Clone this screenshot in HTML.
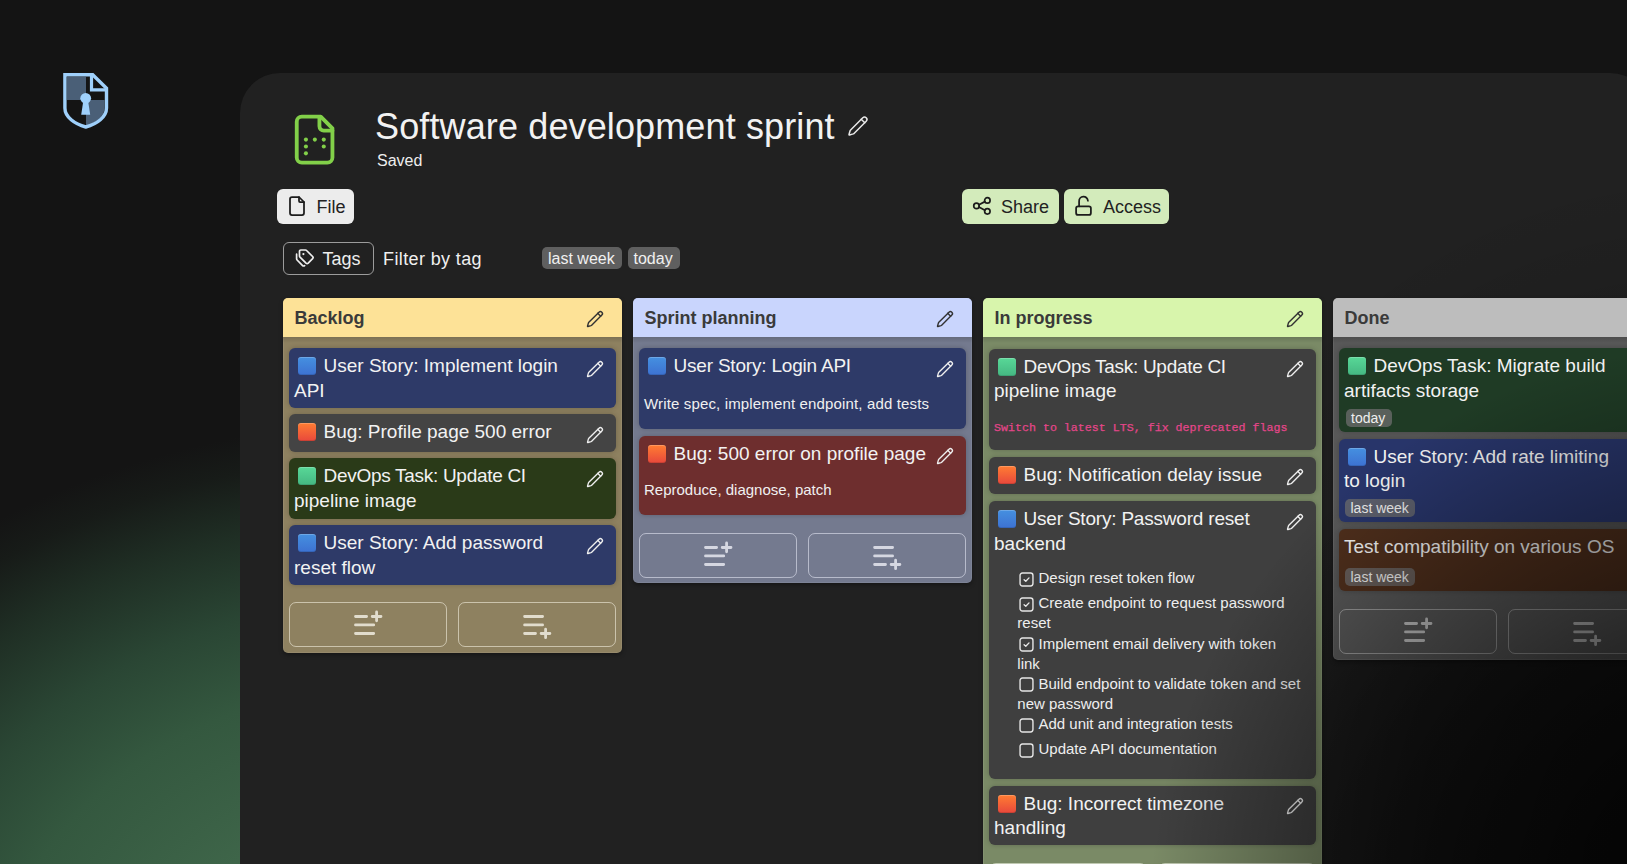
<!DOCTYPE html><html><head><meta charset="utf-8"><style>
html,body{margin:0;padding:0;}
body{width:1627px;height:864px;overflow:hidden;position:relative;background:#141414;font-family:"Liberation Sans",sans-serif;}
.t{position:absolute;white-space:nowrap;}
</style></head><body>
<div style="position:absolute;left:0.00px;top:0.00px;width:1627.00px;height:864.00px;background:radial-gradient(ellipse 760px 590px at 420px 1010px, #416a4c 0%, #3e6549 35%, #34583f 56%, #2a4634 70%, #1f2e24 84%, #171b18 94%, #141414 100%);"></div>
<svg style="position:absolute;left:58.00px;top:68.00px;" width="56" height="66" viewBox="58 68 56 66" fill="none"><path d="M67 77 H86 V100 H67 Z" fill="#4a5f77"/><path d="M86 100 H104.5 V108 C104.5 116 96 123 86 126 Z" fill="#4a5f77"/><path d="M91.5 74.5 V89.8 H106.5" stroke="#9fd0fb" stroke-width="3.2"/><path d="M64.9 74.7 H92.7 L106.5 88.2 V108 C106.5 117 97 124 85.8 127 C74.6 124 64.9 117 64.9 108 Z" stroke="#9fd0fb" stroke-width="3.4" stroke-linejoin="miter"/><circle cx="85.7" cy="98.3" r="5.4" fill="#9fd0fb"/><path d="M83.3 101 H88.1 L90.2 114.7 H81.2 Z" fill="#9fd0fb"/></svg>
<div style="position:absolute;left:240.00px;top:73.00px;width:1410.00px;height:900.00px;background:#212121;border-radius:40px;"></div>
<div style="position:absolute;left:240.00px;top:73.00px;width:1410.00px;height:900.00px;background:radial-gradient(ellipse 600px 700px at 1460px 791px, rgba(0,0,0,0.5) 0%, rgba(0,0,0,0.34) 50%, rgba(0,0,0,0.14) 70%, rgba(0,0,0,0) 100%);border-radius:40px;"></div>
<svg style="position:absolute;left:284.00px;top:109.00px;" width="61.2" height="61.2" viewBox="0 0 24 24" fill="none"><g stroke="#82d049" stroke-width="1.5" stroke-linecap="round" stroke-linejoin="round"><path d="M13.9 3.2v3.6a1.7 1.7 0 0 0 1.7 1.7h3.4"/><path d="M17 21h-10a2 2 0 0 1-2-2v-14a2 2 0 0 1 2-2h7.4l4.6 4.6v11.4a2 2 0 0 1-2 2z"/></g><g fill="#82d049"><circle cx="8.6" cy="12" r="0.8"/><circle cx="12.1" cy="12" r="0.8"/><circle cx="15.6" cy="12" r="0.8"/><circle cx="8.6" cy="14.7" r="0.8"/><circle cx="15.6" cy="14.7" r="0.8"/><circle cx="8.6" cy="17.4" r="0.8"/></g></svg>
<div class="t" style="left:375.00px;top:103.63px;font-size:36px;line-height:46.8px;color:#f2f2f2;font-weight:400;font-family:'Liberation Sans', sans-serif;letter-spacing:0.13px;">Software development sprint</div>
<svg style="position:absolute;left:845.50px;top:113.50px;" width="24" height="24" viewBox="0 0 24 24" fill="none"><g stroke="#e8e8e8" stroke-width="1.5" stroke-linecap="round" stroke-linejoin="round"><path d="M20.2 7.2a2.4 2.4 0 0 0-3.4-3.4L4.6 16a2 2 0 0 0-.5.8l-1.1 3.7a.4.4 0 0 0 .5.5l3.7-1.1a2 2 0 0 0 .8-.5z"/><path d="M15.2 5.2l3.6 3.6"/></g></svg>
<div class="t" style="left:377.00px;top:151.26px;font-size:16px;line-height:20.8px;color:#eeeeee;font-weight:400;font-family:'Liberation Sans', sans-serif;">Saved</div>
<div style="position:absolute;left:277.00px;top:189.00px;width:77.00px;height:35.00px;background:#ececec;border-radius:6px;"></div>
<svg style="position:absolute;left:285.10px;top:194.40px;" width="24" height="24" viewBox="0 0 24 24" fill="none"><g stroke="#1c1c1c" stroke-width="1.75" stroke-linecap="round" stroke-linejoin="round"><path d="M14 3v4a1 1 0 0 0 1 1h4"/><path d="M17 21h-10a2 2 0 0 1-2-2v-14a2 2 0 0 1 2-2h7l5 5v11a2 2 0 0 1-2 2z"/></g></svg>
<div class="t" style="left:316.50px;top:196.16px;font-size:18px;line-height:23.4px;color:#222;font-weight:400;font-family:'Liberation Sans', sans-serif;">File</div>
<div style="position:absolute;left:962.00px;top:189.00px;width:97.00px;height:35.00px;background:#d3ebbb;border-radius:6px;"></div>
<svg style="position:absolute;left:970.50px;top:195.30px;" width="21.8" height="21.8" viewBox="0 0 24 24" fill="none"><g stroke="#1c1c1c" stroke-width="1.9" stroke-linecap="round" stroke-linejoin="round"><circle cx="6" cy="12" r="3"/><circle cx="18" cy="6" r="3"/><circle cx="18" cy="18" r="3"/><path d="M8.7 10.7l6.6-3.4"/><path d="M8.7 13.3l6.6 3.4"/></g></svg>
<div class="t" style="left:1001.00px;top:196.16px;font-size:18px;line-height:23.4px;color:#222;font-weight:400;font-family:'Liberation Sans', sans-serif;">Share</div>
<div style="position:absolute;left:1064.00px;top:189.00px;width:104.50px;height:35.00px;background:#d3ebbb;border-radius:6px;"></div>
<svg style="position:absolute;left:1070.00px;top:192.00px;" width="30" height="30" viewBox="1070 192 30 30" fill="none"><g stroke="#1c1c1c" stroke-width="1.75" stroke-linecap="round" stroke-linejoin="round"><rect x="1076.1" y="206.3" width="14.8" height="8.6" rx="2"/><path d="M1079.1 206.3 V201.3 A4.4 4.4 0 0 1 1087.9 200.8"/></g></svg>
<div class="t" style="left:1103.00px;top:196.16px;font-size:18px;line-height:23.4px;color:#222;font-weight:400;font-family:'Liberation Sans', sans-serif;">Access</div>
<div style="position:absolute;left:283.00px;top:242.00px;width:91.00px;height:32.50px;border:1px solid #9c9c9c;border-radius:6px;box-sizing:border-box;"></div>
<svg style="position:absolute;left:290.00px;top:243.00px;" width="30" height="30" viewBox="290 243 30 30" fill="none"><g stroke="#eeeeee" stroke-width="1.7" stroke-linecap="round" stroke-linejoin="round"><path d="M300.8 250 H305.5 a1.6 1.6 0 0 1 1.1 .5 L312.6 256.5 a1.6 1.6 0 0 1 0 2.2 L308.2 263.1 a1.6 1.6 0 0 1 -2.2 0 L300 257.1 a1.6 1.6 0 0 1 -.5 -1.1 V251.3 a1.3 1.3 0 0 1 1.3 -1.3z"/><path d="M296.6 254.2 V258.8 a1.8 1.8 0 0 0 .5 1.2 L302.6 265.6 a1.4 1.4 0 0 0 2 0"/></g><circle cx="303.4" cy="254.1" r="1.1" fill="#eee"/></svg>
<div class="t" style="left:322.50px;top:248.16px;font-size:18px;line-height:23.4px;color:#eeeeee;font-weight:400;font-family:'Liberation Sans', sans-serif;">Tags</div>
<div class="t" style="left:383.00px;top:248.16px;font-size:18px;line-height:23.4px;color:#f0f0f0;font-weight:400;font-family:'Liberation Sans', sans-serif;letter-spacing:0.38px;">Filter by tag</div>
<div style="position:absolute;left:542.30px;top:247.40px;width:79.80px;height:21.90px;background:#5f5f5f;border-radius:5px;"></div>
<div class="t" style="left:548.00px;top:249.16px;font-size:16px;line-height:20.8px;color:#f0f0f0;font-weight:400;font-family:'Liberation Sans', sans-serif;">last week</div>
<div style="position:absolute;left:627.80px;top:247.40px;width:52.60px;height:21.90px;background:#5f5f5f;border-radius:5px;"></div>
<div class="t" style="left:633.50px;top:249.16px;font-size:16px;line-height:20.8px;color:#f0f0f0;font-weight:400;font-family:'Liberation Sans', sans-serif;">today</div>
<div style="position:absolute;left:283.00px;top:298.00px;width:339.00px;height:355.00px;background:#8e8160;border-radius:5px;box-shadow:inset 0 0 0 1px rgba(255,255,255,0.07), 0 2px 4px rgba(0,0,0,0.35);"></div>
<div style="position:absolute;left:283.00px;top:298.00px;width:339.00px;height:38.60px;background:#fde297;border-radius:5px 5px 0 0;"></div>
<div style="position:absolute;left:283.00px;top:336.60px;width:339.00px;height:6.00px;background:linear-gradient(180deg,rgba(0,0,0,0.13),rgba(0,0,0,0));"></div>
<div class="t" style="left:294.50px;top:307.16px;font-size:18px;line-height:23.4px;color:#3a3a3a;font-weight:700;font-family:'Liberation Sans', sans-serif;">Backlog</div>
<svg style="position:absolute;left:585.00px;top:309.20px;" width="20" height="20" viewBox="0 0 24 24" fill="none"><g stroke="#333333" stroke-width="1.7" stroke-linecap="round" stroke-linejoin="round"><path d="M20.2 7.2a2.4 2.4 0 0 0-3.4-3.4L4.6 16a2 2 0 0 0-.5.8l-1.1 3.7a.4.4 0 0 0 .5.5l3.7-1.1a2 2 0 0 0 .8-.5z"/><path d="M15.2 5.2l3.6 3.6"/></g></svg>
<div style="position:absolute;left:289.00px;top:348.40px;width:327.00px;height:59.40px;background:#2e3a68;border-radius:6px;box-shadow:0 0 5px rgba(0,0,0,0.22);"></div>
<div style="position:absolute;left:298.00px;top:357.40px;width:18.00px;height:18.00px;background:linear-gradient(180deg,#4590e0,#3d72d2);border-radius:3px;box-shadow:inset 0 1px 0 rgba(255,255,255,0.22), inset 0 -1px 0 rgba(0,0,0,0.12);"></div>
<div class="t" style="left:323.50px;top:354.47px;font-size:19px;line-height:24.7px;color:#f2f2f2;font-weight:400;font-family:'Liberation Sans', sans-serif;">User Story: Implement login</div>
<div class="t" style="left:294.00px;top:379.07px;font-size:19px;line-height:24.7px;color:#f2f2f2;font-weight:400;font-family:'Liberation Sans', sans-serif;">API</div>
<svg style="position:absolute;left:585.20px;top:359.00px;" width="20" height="20" viewBox="0 0 24 24" fill="none"><g stroke="#eeeeee" stroke-width="1.6" stroke-linecap="round" stroke-linejoin="round"><path d="M20.2 7.2a2.4 2.4 0 0 0-3.4-3.4L4.6 16a2 2 0 0 0-.5.8l-1.1 3.7a.4.4 0 0 0 .5.5l3.7-1.1a2 2 0 0 0 .8-.5z"/><path d="M15.2 5.2l3.6 3.6"/></g></svg>
<div style="position:absolute;left:289.00px;top:414.30px;width:327.00px;height:38.00px;background:#444444;border-radius:6px;box-shadow:0 0 5px rgba(0,0,0,0.22);"></div>
<div style="position:absolute;left:298.00px;top:423.30px;width:18.00px;height:18.00px;background:linear-gradient(180deg,#ff7d33,#e8483c);border-radius:3px;box-shadow:inset 0 1px 0 rgba(255,255,255,0.22), inset 0 -1px 0 rgba(0,0,0,0.12);"></div>
<div class="t" style="left:323.50px;top:420.37px;font-size:19px;line-height:24.7px;color:#f2f2f2;font-weight:400;font-family:'Liberation Sans', sans-serif;">Bug: Profile page 500 error</div>
<svg style="position:absolute;left:585.20px;top:424.80px;" width="20" height="20" viewBox="0 0 24 24" fill="none"><g stroke="#eeeeee" stroke-width="1.6" stroke-linecap="round" stroke-linejoin="round"><path d="M20.2 7.2a2.4 2.4 0 0 0-3.4-3.4L4.6 16a2 2 0 0 0-.5.8l-1.1 3.7a.4.4 0 0 0 .5.5l3.7-1.1a2 2 0 0 0 .8-.5z"/><path d="M15.2 5.2l3.6 3.6"/></g></svg>
<div style="position:absolute;left:289.00px;top:458.40px;width:327.00px;height:60.30px;background:#2a3a18;border-radius:6px;box-shadow:0 0 5px rgba(0,0,0,0.22);"></div>
<div style="position:absolute;left:298.00px;top:467.40px;width:18.00px;height:18.00px;background:linear-gradient(180deg,#58d897,#45b782);border-radius:3px;box-shadow:inset 0 1px 0 rgba(255,255,255,0.22), inset 0 -1px 0 rgba(0,0,0,0.12);"></div>
<div class="t" style="left:323.50px;top:464.47px;font-size:19px;line-height:24.7px;color:#f2f2f2;font-weight:400;font-family:'Liberation Sans', sans-serif;letter-spacing:-0.29px;">DevOps Task: Update CI</div>
<div class="t" style="left:294.00px;top:489.07px;font-size:19px;line-height:24.7px;color:#f2f2f2;font-weight:400;font-family:'Liberation Sans', sans-serif;">pipeline image</div>
<svg style="position:absolute;left:585.20px;top:469.00px;" width="20" height="20" viewBox="0 0 24 24" fill="none"><g stroke="#eeeeee" stroke-width="1.6" stroke-linecap="round" stroke-linejoin="round"><path d="M20.2 7.2a2.4 2.4 0 0 0-3.4-3.4L4.6 16a2 2 0 0 0-.5.8l-1.1 3.7a.4.4 0 0 0 .5.5l3.7-1.1a2 2 0 0 0 .8-.5z"/><path d="M15.2 5.2l3.6 3.6"/></g></svg>
<div style="position:absolute;left:289.00px;top:525.00px;width:327.00px;height:60.00px;background:#2e3a68;border-radius:6px;box-shadow:0 0 5px rgba(0,0,0,0.22);"></div>
<div style="position:absolute;left:298.00px;top:534.00px;width:18.00px;height:18.00px;background:linear-gradient(180deg,#4590e0,#3d72d2);border-radius:3px;box-shadow:inset 0 1px 0 rgba(255,255,255,0.22), inset 0 -1px 0 rgba(0,0,0,0.12);"></div>
<div class="t" style="left:323.50px;top:531.07px;font-size:19px;line-height:24.7px;color:#f2f2f2;font-weight:400;font-family:'Liberation Sans', sans-serif;">User Story: Add password</div>
<div class="t" style="left:294.00px;top:555.67px;font-size:19px;line-height:24.7px;color:#f2f2f2;font-weight:400;font-family:'Liberation Sans', sans-serif;">reset flow</div>
<svg style="position:absolute;left:585.20px;top:535.60px;" width="20" height="20" viewBox="0 0 24 24" fill="none"><g stroke="#eeeeee" stroke-width="1.6" stroke-linecap="round" stroke-linejoin="round"><path d="M20.2 7.2a2.4 2.4 0 0 0-3.4-3.4L4.6 16a2 2 0 0 0-.5.8l-1.1 3.7a.4.4 0 0 0 .5.5l3.7-1.1a2 2 0 0 0 .8-.5z"/><path d="M15.2 5.2l3.6 3.6"/></g></svg>
<div style="position:absolute;left:289.00px;top:602.00px;width:158.00px;height:45.00px;border:1.6px solid rgba(240,235,220,0.62);border-radius:7px;box-sizing:border-box;"></div>
<div style="position:absolute;left:458.00px;top:602.00px;width:158.00px;height:45.00px;border:1.6px solid rgba(240,235,220,0.62);border-radius:7px;box-sizing:border-box;"></div>
<svg style="position:absolute;left:289.00px;top:602.00px;" width="158" height="45" viewBox="0 0 158 45" fill="none"><g stroke="rgba(240,236,225,0.85)" stroke-width="2.8" stroke-linecap="round"><path d="M66.5 14.5h11.1M66.5 22.9h18.2M66.5 31.5h18.2M83.2 14.5h8.8M87.6 10v8.8"/></g></svg>
<svg style="position:absolute;left:458.00px;top:602.00px;" width="158" height="45" viewBox="0 0 158 45" fill="none"><g stroke="rgba(240,236,225,0.85)" stroke-width="2.8" stroke-linecap="round"><path d="M66.6 14.5h18M66.6 22.9h18M66.6 31.5h10.9M83.1 31.5h8.8M87.6 27.2v8.5"/></g></svg>
<div style="position:absolute;left:633.00px;top:298.00px;width:339.00px;height:285.30px;background:#747a8f;border-radius:5px;box-shadow:inset 0 0 0 1px rgba(255,255,255,0.07), 0 2px 4px rgba(0,0,0,0.35);"></div>
<div style="position:absolute;left:633.00px;top:298.00px;width:339.00px;height:38.60px;background:#c9d5fd;border-radius:5px 5px 0 0;"></div>
<div style="position:absolute;left:633.00px;top:336.60px;width:339.00px;height:6.00px;background:linear-gradient(180deg,rgba(0,0,0,0.13),rgba(0,0,0,0));"></div>
<div class="t" style="left:644.50px;top:307.16px;font-size:18px;line-height:23.4px;color:#3a3a3a;font-weight:700;font-family:'Liberation Sans', sans-serif;">Sprint planning</div>
<svg style="position:absolute;left:935.00px;top:309.20px;" width="20" height="20" viewBox="0 0 24 24" fill="none"><g stroke="#333333" stroke-width="1.7" stroke-linecap="round" stroke-linejoin="round"><path d="M20.2 7.2a2.4 2.4 0 0 0-3.4-3.4L4.6 16a2 2 0 0 0-.5.8l-1.1 3.7a.4.4 0 0 0 .5.5l3.7-1.1a2 2 0 0 0 .8-.5z"/><path d="M15.2 5.2l3.6 3.6"/></g></svg>
<div style="position:absolute;left:639.00px;top:348.30px;width:327.00px;height:80.30px;background:#2e3a68;border-radius:6px;box-shadow:0 0 5px rgba(0,0,0,0.22);"></div>
<div style="position:absolute;left:648.00px;top:357.30px;width:18.00px;height:18.00px;background:linear-gradient(180deg,#4590e0,#3d72d2);border-radius:3px;box-shadow:inset 0 1px 0 rgba(255,255,255,0.22), inset 0 -1px 0 rgba(0,0,0,0.12);"></div>
<div class="t" style="left:673.50px;top:354.37px;font-size:19px;line-height:24.7px;color:#f2f2f2;font-weight:400;font-family:'Liberation Sans', sans-serif;letter-spacing:-0.2px;">User Story: Login API</div>
<svg style="position:absolute;left:935.20px;top:359.00px;" width="20" height="20" viewBox="0 0 24 24" fill="none"><g stroke="#eeeeee" stroke-width="1.6" stroke-linecap="round" stroke-linejoin="round"><path d="M20.2 7.2a2.4 2.4 0 0 0-3.4-3.4L4.6 16a2 2 0 0 0-.5.8l-1.1 3.7a.4.4 0 0 0 .5.5l3.7-1.1a2 2 0 0 0 .8-.5z"/><path d="M15.2 5.2l3.6 3.6"/></g></svg>
<div class="t" style="left:644.00px;top:393.85px;font-size:15px;line-height:19.5px;color:#f0f0f0;font-weight:400;font-family:'Liberation Sans', sans-serif;letter-spacing:0.15px;">Write spec, implement endpoint, add tests</div>
<div style="position:absolute;left:639.00px;top:435.60px;width:327.00px;height:79.60px;background:#6e2e2e;border-radius:6px;box-shadow:0 0 5px rgba(0,0,0,0.22);"></div>
<div style="position:absolute;left:648.00px;top:444.60px;width:18.00px;height:18.00px;background:linear-gradient(180deg,#ff7d33,#e8483c);border-radius:3px;box-shadow:inset 0 1px 0 rgba(255,255,255,0.22), inset 0 -1px 0 rgba(0,0,0,0.12);"></div>
<div class="t" style="left:673.50px;top:441.67px;font-size:19px;line-height:24.7px;color:#f2f2f2;font-weight:400;font-family:'Liberation Sans', sans-serif;">Bug: 500 error on profile page</div>
<svg style="position:absolute;left:935.20px;top:446.00px;" width="20" height="20" viewBox="0 0 24 24" fill="none"><g stroke="#eeeeee" stroke-width="1.6" stroke-linecap="round" stroke-linejoin="round"><path d="M20.2 7.2a2.4 2.4 0 0 0-3.4-3.4L4.6 16a2 2 0 0 0-.5.8l-1.1 3.7a.4.4 0 0 0 .5.5l3.7-1.1a2 2 0 0 0 .8-.5z"/><path d="M15.2 5.2l3.6 3.6"/></g></svg>
<div class="t" style="left:644.00px;top:479.55px;font-size:15px;line-height:19.5px;color:#f0f0f0;font-weight:400;font-family:'Liberation Sans', sans-serif;">Reproduce, diagnose, patch</div>
<div style="position:absolute;left:639.00px;top:532.80px;width:158.00px;height:45.00px;border:1.6px solid rgba(225,228,240,0.62);border-radius:7px;box-sizing:border-box;"></div>
<div style="position:absolute;left:808.00px;top:532.80px;width:158.00px;height:45.00px;border:1.6px solid rgba(225,228,240,0.62);border-radius:7px;box-sizing:border-box;"></div>
<svg style="position:absolute;left:639.00px;top:532.80px;" width="158" height="45" viewBox="0 0 158 45" fill="none"><g stroke="rgba(230,232,240,0.85)" stroke-width="2.8" stroke-linecap="round"><path d="M66.5 14.5h11.1M66.5 22.9h18.2M66.5 31.5h18.2M83.2 14.5h8.8M87.6 10v8.8"/></g></svg>
<svg style="position:absolute;left:808.00px;top:532.80px;" width="158" height="45" viewBox="0 0 158 45" fill="none"><g stroke="rgba(230,232,240,0.85)" stroke-width="2.8" stroke-linecap="round"><path d="M66.6 14.5h18M66.6 22.9h18M66.6 31.5h10.9M83.1 31.5h8.8M87.6 27.2v8.5"/></g></svg>
<div style="position:absolute;left:983.00px;top:298.00px;width:339.00px;height:702.00px;background:#7a8a66;border-radius:5px;box-shadow:inset 0 0 0 1px rgba(255,255,255,0.07), 0 2px 4px rgba(0,0,0,0.35);"></div>
<div style="position:absolute;left:983.00px;top:298.00px;width:339.00px;height:38.60px;background:#d8f5ac;border-radius:5px 5px 0 0;"></div>
<div style="position:absolute;left:983.00px;top:336.60px;width:339.00px;height:6.00px;background:linear-gradient(180deg,rgba(0,0,0,0.13),rgba(0,0,0,0));"></div>
<div class="t" style="left:994.50px;top:307.16px;font-size:18px;line-height:23.4px;color:#3a3a3a;font-weight:700;font-family:'Liberation Sans', sans-serif;">In progress</div>
<svg style="position:absolute;left:1285.00px;top:309.20px;" width="20" height="20" viewBox="0 0 24 24" fill="none"><g stroke="#333333" stroke-width="1.7" stroke-linecap="round" stroke-linejoin="round"><path d="M20.2 7.2a2.4 2.4 0 0 0-3.4-3.4L4.6 16a2 2 0 0 0-.5.8l-1.1 3.7a.4.4 0 0 0 .5.5l3.7-1.1a2 2 0 0 0 .8-.5z"/><path d="M15.2 5.2l3.6 3.6"/></g></svg>
<div style="position:absolute;left:989.00px;top:348.60px;width:327.00px;height:101.40px;background:#3f3f3f;border-radius:6px;box-shadow:0 0 5px rgba(0,0,0,0.22);"></div>
<div style="position:absolute;left:998.00px;top:357.60px;width:18.00px;height:18.00px;background:linear-gradient(180deg,#58d897,#45b782);border-radius:3px;box-shadow:inset 0 1px 0 rgba(255,255,255,0.22), inset 0 -1px 0 rgba(0,0,0,0.12);"></div>
<div class="t" style="left:1023.50px;top:354.67px;font-size:19px;line-height:24.7px;color:#f2f2f2;font-weight:400;font-family:'Liberation Sans', sans-serif;letter-spacing:-0.29px;">DevOps Task: Update CI</div>
<div class="t" style="left:994.00px;top:379.27px;font-size:19px;line-height:24.7px;color:#f2f2f2;font-weight:400;font-family:'Liberation Sans', sans-serif;">pipeline image</div>
<svg style="position:absolute;left:1285.20px;top:359.00px;" width="20" height="20" viewBox="0 0 24 24" fill="none"><g stroke="#eeeeee" stroke-width="1.6" stroke-linecap="round" stroke-linejoin="round"><path d="M20.2 7.2a2.4 2.4 0 0 0-3.4-3.4L4.6 16a2 2 0 0 0-.5.8l-1.1 3.7a.4.4 0 0 0 .5.5l3.7-1.1a2 2 0 0 0 .8-.5z"/><path d="M15.2 5.2l3.6 3.6"/></g></svg>
<div class="t" style="left:994.00px;top:419.52px;font-size:11.65px;line-height:15.15px;color:#e4468a;font-weight:400;font-family:'Liberation Mono', monospace;-webkit-text-stroke:0.25px #e4468a;">Switch to latest LTS, fix deprecated flags</div>
<div style="position:absolute;left:989.00px;top:457.00px;width:327.00px;height:37.00px;background:#3f3f3f;border-radius:6px;box-shadow:0 0 5px rgba(0,0,0,0.22);"></div>
<div style="position:absolute;left:998.00px;top:466.00px;width:18.00px;height:18.00px;background:linear-gradient(180deg,#ff7d33,#e8483c);border-radius:3px;box-shadow:inset 0 1px 0 rgba(255,255,255,0.22), inset 0 -1px 0 rgba(0,0,0,0.12);"></div>
<div class="t" style="left:1023.50px;top:463.07px;font-size:19px;line-height:24.7px;color:#f2f2f2;font-weight:400;font-family:'Liberation Sans', sans-serif;">Bug: Notification delay issue</div>
<svg style="position:absolute;left:1285.20px;top:467.00px;" width="20" height="20" viewBox="0 0 24 24" fill="none"><g stroke="#eeeeee" stroke-width="1.6" stroke-linecap="round" stroke-linejoin="round"><path d="M20.2 7.2a2.4 2.4 0 0 0-3.4-3.4L4.6 16a2 2 0 0 0-.5.8l-1.1 3.7a.4.4 0 0 0 .5.5l3.7-1.1a2 2 0 0 0 .8-.5z"/><path d="M15.2 5.2l3.6 3.6"/></g></svg>
<div style="position:absolute;left:989.00px;top:501.00px;width:327.00px;height:277.70px;background:#3f3f3f;border-radius:6px;box-shadow:0 0 5px rgba(0,0,0,0.22);"></div>
<div style="position:absolute;left:998.00px;top:510.00px;width:18.00px;height:18.00px;background:linear-gradient(180deg,#4590e0,#3d72d2);border-radius:3px;box-shadow:inset 0 1px 0 rgba(255,255,255,0.22), inset 0 -1px 0 rgba(0,0,0,0.12);"></div>
<div class="t" style="left:1023.50px;top:507.07px;font-size:19px;line-height:24.7px;color:#f2f2f2;font-weight:400;font-family:'Liberation Sans', sans-serif;letter-spacing:-0.2px;">User Story: Password reset</div>
<div class="t" style="left:994.00px;top:531.67px;font-size:19px;line-height:24.7px;color:#f2f2f2;font-weight:400;font-family:'Liberation Sans', sans-serif;">backend</div>
<svg style="position:absolute;left:1285.20px;top:511.50px;" width="20" height="20" viewBox="0 0 24 24" fill="none"><g stroke="#eeeeee" stroke-width="1.6" stroke-linecap="round" stroke-linejoin="round"><path d="M20.2 7.2a2.4 2.4 0 0 0-3.4-3.4L4.6 16a2 2 0 0 0-.5.8l-1.1 3.7a.4.4 0 0 0 .5.5l3.7-1.1a2 2 0 0 0 .8-.5z"/><path d="M15.2 5.2l3.6 3.6"/></g></svg>
<svg style="position:absolute;left:1018.50px;top:572.10px;" width="15" height="15" viewBox="0 0 15 15" fill="none"><rect x="1.05" y="1.05" width="12.9" height="12.9" rx="2.4" stroke="#e6e6e6" stroke-width="1.4"/><path d="M5.1 7.7l1.7 1.6 3.2-3.4" stroke="#e8e8e8" stroke-width="1.35" stroke-linecap="round" stroke-linejoin="round"/></svg>
<div class="t" style="left:1038.50px;top:568.25px;font-size:15px;line-height:19.5px;color:#eeeeee;font-weight:400;font-family:'Liberation Sans', sans-serif;">Design reset token flow</div>
<svg style="position:absolute;left:1018.50px;top:596.80px;" width="15" height="15" viewBox="0 0 15 15" fill="none"><rect x="1.05" y="1.05" width="12.9" height="12.9" rx="2.4" stroke="#e6e6e6" stroke-width="1.4"/><path d="M5.1 7.7l1.7 1.6 3.2-3.4" stroke="#e8e8e8" stroke-width="1.35" stroke-linecap="round" stroke-linejoin="round"/></svg>
<div class="t" style="left:1038.50px;top:592.95px;font-size:15px;line-height:19.5px;color:#eeeeee;font-weight:400;font-family:'Liberation Sans', sans-serif;">Create endpoint to request password</div>
<div class="t" style="left:1017.30px;top:613.45px;font-size:15px;line-height:19.5px;color:#eeeeee;font-weight:400;font-family:'Liberation Sans', sans-serif;">reset</div>
<svg style="position:absolute;left:1018.50px;top:637.40px;" width="15" height="15" viewBox="0 0 15 15" fill="none"><rect x="1.05" y="1.05" width="12.9" height="12.9" rx="2.4" stroke="#e6e6e6" stroke-width="1.4"/><path d="M5.1 7.7l1.7 1.6 3.2-3.4" stroke="#e8e8e8" stroke-width="1.35" stroke-linecap="round" stroke-linejoin="round"/></svg>
<div class="t" style="left:1038.50px;top:633.55px;font-size:15px;line-height:19.5px;color:#eeeeee;font-weight:400;font-family:'Liberation Sans', sans-serif;">Implement email delivery with token</div>
<div class="t" style="left:1017.30px;top:654.05px;font-size:15px;line-height:19.5px;color:#eeeeee;font-weight:400;font-family:'Liberation Sans', sans-serif;">link</div>
<svg style="position:absolute;left:1018.50px;top:677.40px;" width="15" height="15" viewBox="0 0 15 15" fill="none"><rect x="1.05" y="1.05" width="12.9" height="12.9" rx="2.4" stroke="#e6e6e6" stroke-width="1.4"/></svg>
<div class="t" style="left:1038.50px;top:673.55px;font-size:15px;line-height:19.5px;color:#eeeeee;font-weight:400;font-family:'Liberation Sans', sans-serif;">Build endpoint to validate token and set</div>
<div class="t" style="left:1017.30px;top:694.05px;font-size:15px;line-height:19.5px;color:#eeeeee;font-weight:400;font-family:'Liberation Sans', sans-serif;">new password</div>
<svg style="position:absolute;left:1018.50px;top:718.10px;" width="15" height="15" viewBox="0 0 15 15" fill="none"><rect x="1.05" y="1.05" width="12.9" height="12.9" rx="2.4" stroke="#e6e6e6" stroke-width="1.4"/></svg>
<div class="t" style="left:1038.50px;top:714.25px;font-size:15px;line-height:19.5px;color:#eeeeee;font-weight:400;font-family:'Liberation Sans', sans-serif;">Add unit and integration tests</div>
<svg style="position:absolute;left:1018.50px;top:743.30px;" width="15" height="15" viewBox="0 0 15 15" fill="none"><rect x="1.05" y="1.05" width="12.9" height="12.9" rx="2.4" stroke="#e6e6e6" stroke-width="1.4"/></svg>
<div class="t" style="left:1038.50px;top:739.45px;font-size:15px;line-height:19.5px;color:#eeeeee;font-weight:400;font-family:'Liberation Sans', sans-serif;">Update API documentation</div>
<div style="position:absolute;left:989.00px;top:785.60px;width:327.00px;height:59.10px;background:#3f3f3f;border-radius:6px;box-shadow:0 0 5px rgba(0,0,0,0.22);"></div>
<div style="position:absolute;left:998.00px;top:794.60px;width:18.00px;height:18.00px;background:linear-gradient(180deg,#ff7d33,#e8483c);border-radius:3px;box-shadow:inset 0 1px 0 rgba(255,255,255,0.22), inset 0 -1px 0 rgba(0,0,0,0.12);"></div>
<div class="t" style="left:1023.50px;top:791.67px;font-size:19px;line-height:24.7px;color:#f2f2f2;font-weight:400;font-family:'Liberation Sans', sans-serif;">Bug: Incorrect timezone</div>
<div class="t" style="left:994.00px;top:816.27px;font-size:19px;line-height:24.7px;color:#f2f2f2;font-weight:400;font-family:'Liberation Sans', sans-serif;">handling</div>
<svg style="position:absolute;left:1285.20px;top:796.00px;" width="20" height="20" viewBox="0 0 24 24" fill="none"><g stroke="#eeeeee" stroke-width="1.6" stroke-linecap="round" stroke-linejoin="round"><path d="M20.2 7.2a2.4 2.4 0 0 0-3.4-3.4L4.6 16a2 2 0 0 0-.5.8l-1.1 3.7a.4.4 0 0 0 .5.5l3.7-1.1a2 2 0 0 0 .8-.5z"/><path d="M15.2 5.2l3.6 3.6"/></g></svg>
<div style="position:absolute;left:989.00px;top:862.70px;width:158.00px;height:45.00px;border:1.6px solid rgba(235,240,225,0.62);border-radius:7px;box-sizing:border-box;"></div>
<div style="position:absolute;left:1158.00px;top:862.70px;width:158.00px;height:45.00px;border:1.6px solid rgba(235,240,225,0.62);border-radius:7px;box-sizing:border-box;"></div>
<svg style="position:absolute;left:989.00px;top:862.70px;" width="158" height="45" viewBox="0 0 158 45" fill="none"><g stroke="rgba(235,240,225,0.85)" stroke-width="2.8" stroke-linecap="round"><path d="M66.5 14.5h11.1M66.5 22.9h18.2M66.5 31.5h18.2M83.2 14.5h8.8M87.6 10v8.8"/></g></svg>
<svg style="position:absolute;left:1158.00px;top:862.70px;" width="158" height="45" viewBox="0 0 158 45" fill="none"><g stroke="rgba(235,240,225,0.85)" stroke-width="2.8" stroke-linecap="round"><path d="M66.6 14.5h18M66.6 22.9h18M66.6 31.5h10.9M83.1 31.5h8.8M87.6 27.2v8.5"/></g></svg>
<div style="position:absolute;left:1333.00px;top:298.00px;width:339.00px;height:361.70px;background:#585858;border-radius:5px;box-shadow:inset 0 0 0 1px rgba(255,255,255,0.07), 0 2px 4px rgba(0,0,0,0.35);"></div>
<div style="position:absolute;left:1333.00px;top:298.00px;width:339.00px;height:38.60px;background:#bdbdbd;border-radius:5px 5px 0 0;"></div>
<div style="position:absolute;left:1333.00px;top:336.60px;width:339.00px;height:6.00px;background:linear-gradient(180deg,rgba(0,0,0,0.13),rgba(0,0,0,0));"></div>
<div class="t" style="left:1344.50px;top:307.16px;font-size:18px;line-height:23.4px;color:#3a3a3a;font-weight:700;font-family:'Liberation Sans', sans-serif;">Done</div>
<div style="position:absolute;left:1339.00px;top:348.20px;width:327.00px;height:83.40px;background:#1f3b25;border-radius:6px;box-shadow:0 0 5px rgba(0,0,0,0.22);"></div>
<div style="position:absolute;left:1348.00px;top:357.20px;width:18.00px;height:18.00px;background:linear-gradient(180deg,#58d897,#45b782);border-radius:3px;box-shadow:inset 0 1px 0 rgba(255,255,255,0.22), inset 0 -1px 0 rgba(0,0,0,0.12);"></div>
<div class="t" style="left:1373.50px;top:354.27px;font-size:19px;line-height:24.7px;color:#f2f2f2;font-weight:400;font-family:'Liberation Sans', sans-serif;">DevOps Task: Migrate build</div>
<div class="t" style="left:1344.00px;top:378.87px;font-size:19px;line-height:24.7px;color:#f2f2f2;font-weight:400;font-family:'Liberation Sans', sans-serif;">artifacts storage</div>
<div style="position:absolute;left:1345.50px;top:408.50px;width:46.00px;height:18.20px;background:rgba(110,110,110,0.75);border-radius:5px;"></div>
<div class="t" style="left:1351.00px;top:409.35px;font-size:14px;line-height:18.2px;color:#eeeeee;font-weight:400;font-family:'Liberation Sans', sans-serif;">today</div>
<div style="position:absolute;left:1339.00px;top:438.80px;width:327.00px;height:83.10px;background:#28356a;border-radius:6px;box-shadow:0 0 5px rgba(0,0,0,0.22);"></div>
<div style="position:absolute;left:1348.00px;top:447.80px;width:18.00px;height:18.00px;background:linear-gradient(180deg,#4590e0,#3d72d2);border-radius:3px;box-shadow:inset 0 1px 0 rgba(255,255,255,0.22), inset 0 -1px 0 rgba(0,0,0,0.12);"></div>
<div class="t" style="left:1373.50px;top:444.87px;font-size:19px;line-height:24.7px;color:#f2f2f2;font-weight:400;font-family:'Liberation Sans', sans-serif;">User Story: Add rate limiting</div>
<div class="t" style="left:1344.00px;top:469.47px;font-size:19px;line-height:24.7px;color:#f2f2f2;font-weight:400;font-family:'Liberation Sans', sans-serif;">to login</div>
<div style="position:absolute;left:1345.00px;top:498.70px;width:69.50px;height:17.90px;background:rgba(110,110,110,0.75);border-radius:5px;"></div>
<div class="t" style="left:1350.50px;top:499.35px;font-size:14px;line-height:18.2px;color:#eeeeee;font-weight:400;font-family:'Liberation Sans', sans-serif;">last week</div>
<div style="position:absolute;left:1339.00px;top:529.10px;width:327.00px;height:62.30px;background:#4f2f1c;border-radius:6px;box-shadow:0 0 5px rgba(0,0,0,0.22);"></div>
<div class="t" style="left:1344.00px;top:535.17px;font-size:19px;line-height:24.7px;color:#f2f2f2;font-weight:400;font-family:'Liberation Sans', sans-serif;">Test compatibility on various OS</div>
<div style="position:absolute;left:1345.00px;top:567.60px;width:69.50px;height:18.00px;background:rgba(110,110,110,0.75);border-radius:5px;"></div>
<div class="t" style="left:1350.50px;top:568.15px;font-size:14px;line-height:18.2px;color:#eeeeee;font-weight:400;font-family:'Liberation Sans', sans-serif;">last week</div>
<div style="position:absolute;left:1339.00px;top:608.70px;width:158.00px;height:45.00px;border:1.6px solid rgba(220,220,220,0.5);border-radius:7px;box-sizing:border-box;"></div>
<div style="position:absolute;left:1508.00px;top:608.70px;width:158.00px;height:45.00px;border:1.6px solid rgba(220,220,220,0.5);border-radius:7px;box-sizing:border-box;"></div>
<svg style="position:absolute;left:1339.00px;top:608.70px;" width="158" height="45" viewBox="0 0 158 45" fill="none"><g stroke="rgba(225,225,225,0.8)" stroke-width="2.8" stroke-linecap="round"><path d="M66.5 14.5h11.1M66.5 22.9h18.2M66.5 31.5h18.2M83.2 14.5h8.8M87.6 10v8.8"/></g></svg>
<svg style="position:absolute;left:1508.00px;top:608.70px;" width="158" height="45" viewBox="0 0 158 45" fill="none"><g stroke="rgba(225,225,225,0.8)" stroke-width="2.8" stroke-linecap="round"><path d="M66.6 14.5h18M66.6 22.9h18M66.6 31.5h10.9M83.1 31.5h8.8M87.6 27.2v8.5"/></g></svg>
<div style="position:absolute;left:0.00px;top:0.00px;width:1627.00px;height:864.00px;background:radial-gradient(ellipse 600px 560px at 1750px 900px, rgba(0,0,0,0.9) 0%, rgba(0,0,0,0.55) 50%, rgba(0,0,0,0.3) 74%, rgba(0,0,0,0) 100%);pointer-events:none;"></div>
</body></html>
